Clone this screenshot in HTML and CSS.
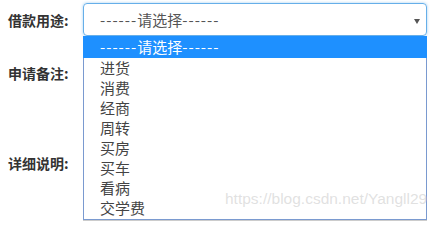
FILE: index.html
```html
<!DOCTYPE html>
<html lang="zh">
<head>
<meta charset="utf-8">
<link rel="stylesheet" href="styles.css">
</head>
<body>
<div class="form">
  <div class="row first">
    <label class="lbl">借款用途:</label>
    <div class="select">
      <span class="val"><span class="dash">------</span>请选择<span class="dash">------</span></span>
      <span class="arrow"></span>
    </div>
  </div>
  <div class="row second">
    <label class="lbl top">申请备注:</label>
    <div class="area a1"></div>
  </div>
  <div class="row third">
    <label class="lbl top">详细说明:</label>
    <div class="area a2"><span class="grip"></span></div>
  </div>
  <ul class="menu">
    <li class="sel"><span class="dash">------</span>请选择<span class="dash">------</span></li>
    <li>进货</li>
    <li>消费</li>
    <li>经商</li>
    <li>周转</li>
    <li>买房</li>
    <li>买车</li>
    <li>看病</li>
    <li>交学费</li>
  </ul>
  <div class="wm">https://blog.csdn.net/Yangll29</div>
</div>
</body>
</html>
```
FILE: styles.css
```css
html, body {
  margin: 0;
  padding: 0;
  background: #fff;
  width: 443px;
  height: 221px;
  overflow: hidden;
}
.form {
  position: relative;
  padding: 3px 16px 0 8px;
  font-family: "Noto Sans CJK SC", "Noto Sans", sans-serif;
  color: #333;
}
.row {
  display: flex;
  align-items: center;
}
.second { margin-top: 20px; align-items: flex-start; }
.third { margin-top: 20px; align-items: flex-start; }
.lbl {
  width: 75px;
  font-size: 14px;
  font-weight: bold;
  line-height: 20px;
  color: #333;
}
.lbl.top { padding-top: 7px; }
.select {
  position: relative;
  box-sizing: border-box;
  width: 344px;
  height: 33px;
  border: 1px solid #66afe9;
  border-radius: 4px;
  box-shadow: 0 0 3px rgba(102,175,233,0.6);
  display: flex;
  align-items: center;
  padding-left: 16px;
  font-size: 15px;
  color: #555;
}
.dash { letter-spacing: 1px; }
.arrow {
  position: absolute;
  right: 6px;
  top: 15px;
  width: 0;
  height: 0;
  border-left: 3px solid transparent;
  border-right: 3px solid transparent;
  border-top: 5px solid #555;
}
.area {
  position: relative;
  box-sizing: border-box;
  width: 344px;
  border: 1px solid #ccc;
  border-radius: 0;
}
.a1 { height: 70px; }
.a2 { height: 75px; }
.grip {
  position: absolute;
  right: 1px;
  bottom: 0;
  width: 6px;
  height: 3px;
  border-top: 1px dotted #999;
}
.menu {
  position: absolute;
  left: 83px;
  top: 36px;
  box-sizing: border-box;
  width: 344px;
  height: 184px;
  margin: 0;
  padding: 0;
  list-style: none;
  background: #fff;
  border: 1px solid #7a9ad0;
  border-top: none;
  font-size: 15px;
  color: #444;
}
.menu li {
  height: 20px;
  line-height: 20px;
  padding-left: 16px;
}
.menu li.sel {
  height: 22px;
  line-height: 22px;
  background: #1e90ff;
  color: #fff;
  margin-left: -1px;
  margin-right: -1px;
  padding-left: 17px;
}
.wm {
  position: absolute;
  left: 225px;
  top: 190px;
  font-family: "Liberation Sans", Arial, sans-serif;
  font-size: 15.5px;
  color: rgba(200,200,200,0.55);
  white-space: nowrap;
  pointer-events: none;
}
```
